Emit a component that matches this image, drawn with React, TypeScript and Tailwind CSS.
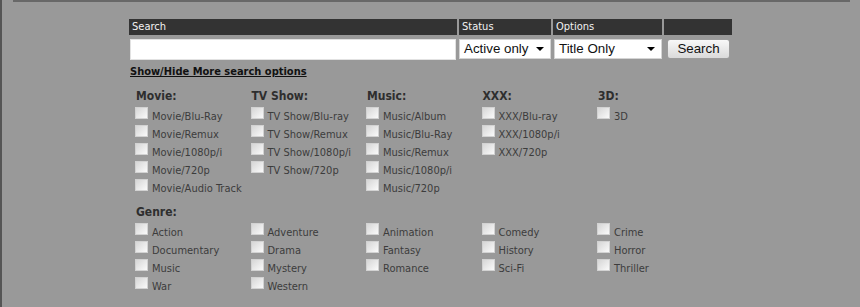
import React from 'react';

const FONTE = { fontFamily: '"DejaVu Sans Condensed", "Liberation Sans", sans-serif' };

const categorias: { titulo: string; itens: string[] }[] = [
  { titulo: 'Movie:', itens: ['Movie/Blu-Ray', 'Movie/Remux', 'Movie/1080p/i', 'Movie/720p', 'Movie/Audio Track'] },
  { titulo: 'TV Show:', itens: ['TV Show/Blu-ray', 'TV Show/Remux', 'TV Show/1080p/i', 'TV Show/720p'] },
  { titulo: 'Music:', itens: ['Music/Album', 'Music/Blu-Ray', 'Music/Remux', 'Music/1080p/i', 'Music/720p'] },
  { titulo: 'XXX:', itens: ['XXX/Blu-ray', 'XXX/1080p/i', 'XXX/720p'] },
  { titulo: '3D:', itens: ['3D'] },
];

const generos = [
  'Action', 'Adventure', 'Animation', 'Comedy', 'Crime',
  'Documentary', 'Drama', 'Fantasy', 'History', 'Horror',
  'Music', 'Mystery', 'Romance', 'Sci-Fi', 'Thriller',
  'War', 'Western',
];

const Caixa: React.FC<{ rotulo: string }> = ({ rotulo }) => (
  <div className="flex items-start h-[18px]">
    <div className="w-[13px] h-[12px] shrink-0 border border-[#d2d2d2] bg-gradient-to-br from-[#d6d6d6] to-[#fafafa]" />
    <span className="ml-[4px] mt-[3px] text-[11px] leading-[13px] text-[#3c3c3c] whitespace-nowrap">{rotulo}</span>
  </div>
);

const Seletor: React.FC<{ texto: string; largura: string }> = ({ texto, largura }) => (
  <div className={`${largura} h-[20px] bg-white border border-[#d4d4d4] flex items-center justify-between pl-[4px] pr-[6px]`}>
    <span className="text-[13.33px] text-[#111]" style={{ fontFamily: '"Liberation Sans", Arial, sans-serif' }}>{texto}</span>
    <span className="w-0 h-0 border-l-[4px] border-r-[4px] border-t-[4px] border-l-transparent border-r-transparent border-t-black" />
  </div>
);

export default function App() {
  return (
    <div className="w-[860px] h-[307px] bg-[#999999] border-l-2 border-[#555555] overflow-hidden" style={FONTE}>
      <div className="ml-[11px] w-[837px] h-[2px] bg-[#686868]" />

      <div className="ml-[127px] mt-[17px]">
        {/* cabeçalho da busca */}
        <div className="flex gap-[2px] h-[16px]">
          {[
            ['Search', 'w-[328px]'],
            ['Status', 'w-[92px]'],
            ['Options', 'w-[109px]'],
            ['', 'w-[68px]'],
          ].map(([t, w], i) => (
            <div key={i} className={`${w} bg-[#333333] text-[#f2f2f2] text-[11px] leading-[16px] pl-[3px]`}>{t}</div>
          ))}
        </div>

        <div className="flex items-start mt-[4px] h-[21px]">
          <div className="ml-[1px] w-[326px] h-[21px] bg-white border border-[#e2e2e2]" />
          <div className="ml-[3px]"><Seletor texto="Active only" largura="w-[92px]" /></div>
          <div className="ml-[3px]"><Seletor texto="Title Only" largura="w-[108px]" /></div>
          <button
            className="ml-[5px] w-[63px] h-[20px] rounded-[3px] border border-[#9c9c9c] bg-gradient-to-b from-[#f8f8f8] to-[#dadada] text-[13.33px] text-[#111] leading-[18px]"
            style={{ fontFamily: '"Liberation Sans", Arial, sans-serif' }}
          >
            Search
          </button>
        </div>

        <div className="ml-[1px] mt-[5px] text-[11px] leading-[13px] font-bold underline text-[#111]">
          Show/Hide More search options
        </div>

        {/* categorias */}
        <div className="ml-[6px] mt-[11px] flex">
          {categorias.map((c) => (
            <div key={c.titulo} className="w-[115.5px] shrink-0">
              <div className="text-[12px] leading-[15px] font-bold text-[#2e2e2e] pl-[1px]">{c.titulo}</div>
              <div className="mt-[3px]">
                {c.itens.map((it) => <Caixa key={it} rotulo={it} />)}
              </div>
            </div>
          ))}
        </div>

        <div className="ml-[6px] mt-[8px]">
          <div className="text-[12px] leading-[15px] font-bold text-[#2e2e2e] pl-[1px]">Genre:</div>
          <div className="mt-[3px] grid grid-cols-[repeat(5,115.5px)]">
            {generos.map((g) => <Caixa key={g} rotulo={g} />)}
          </div>
        </div>
      </div>
    </div>
  );
}
